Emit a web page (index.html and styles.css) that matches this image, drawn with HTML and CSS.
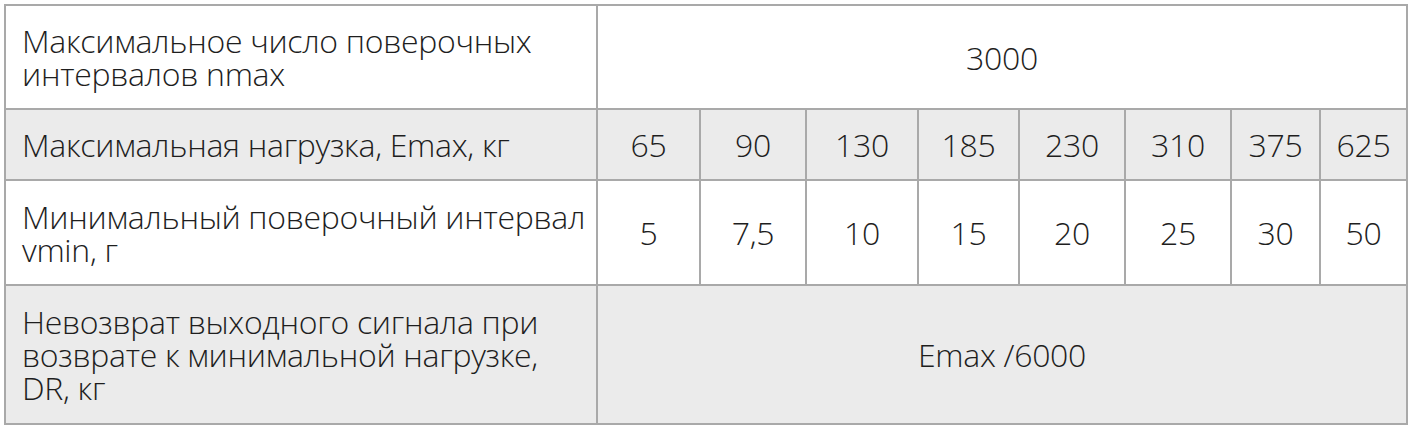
FILE: index.html
```html
<!DOCTYPE html>
<html lang="ru">
<head>
<meta charset="utf-8">
<title>Характеристики</title>
<link rel="stylesheet" href="styles.css">
</head>
<body>
<table class="specs">
  <colgroup>
    <col class="c-label">
    <col class="c-65">
    <col class="c-90">
    <col class="c-130">
    <col class="c-185">
    <col class="c-230">
    <col class="c-310">
    <col class="c-375">
    <col class="c-625">
  </colgroup>
  <tbody>
    <tr class="row-white r1">
      <td class="label">Максимальное число поверочных<br>интервалов nmax</td>
      <td class="val" colspan="8">3000</td>
    </tr>
    <tr class="row-grey r2">
      <td class="label">Максимальная нагрузка, Emax, кг</td>
      <td class="val">65</td>
      <td class="val">90</td>
      <td class="val">130</td>
      <td class="val">185</td>
      <td class="val">230</td>
      <td class="val">310</td>
      <td class="val">375</td>
      <td class="val">625</td>
    </tr>
    <tr class="row-white r3">
      <td class="label">Минимальный поверочный интервал<br>vmin, г</td>
      <td class="val">5</td>
      <td class="val">7,5</td>
      <td class="val">10</td>
      <td class="val">15</td>
      <td class="val">20</td>
      <td class="val">25</td>
      <td class="val">30</td>
      <td class="val">50</td>
    </tr>
    <tr class="row-grey r4">
      <td class="label">Невозврат выходного сигнала при<br>возврате к минимальной нагрузке,<br>DR, кг</td>
      <td class="val" colspan="8">Emax /6000</td>
    </tr>
  </tbody>
</table>
</body>
</html>
```
FILE: styles.css
```css
html, body {
  margin: 0;
  padding: 0;
  background: #ffffff;
}

body {
  padding: 4px 0 0 4px;
  font-family: "Open Sans", "Liberation Sans", sans-serif;
  font-stretch: 100%;
  font-weight: 300;
  font-size: 32px;
  letter-spacing: -0.3px;
  line-height: 33px;
  color: #1e1e1e;
}

.specs {
  border-collapse: collapse;
  table-layout: fixed;
  width: 1404px;
}

.specs td {
  border: 2px solid #a9a9a9;
  padding: 0 8px 0 16px;
  vertical-align: middle;
  white-space: nowrap;
}

.c-label { width: 592px; }
.c-65 { width: 103px; }
.c-90 { width: 106px; }
.c-130 { width: 112px; }
.c-185 { width: 101px; }
.c-230 { width: 106px; }
.c-310 { width: 106px; }
.c-375 { width: 89px; }
.c-625 { width: 87px; }

.specs td.val {
  text-align: center;
  padding: 0 2px;
}

.row-white td { background: #ffffff; }
.row-grey td { background: #ebebeb; }

.r1 { height: 104px; }
.r2 { height: 71px; }
.r3 { height: 105px; }
.r4 { height: 139px; }
```
